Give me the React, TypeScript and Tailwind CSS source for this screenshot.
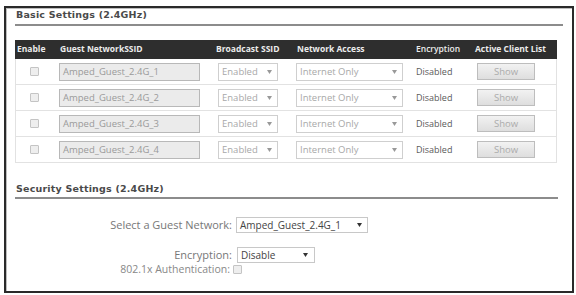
import React from "react";

const ssids = ["Amped_Guest_2.4G_1", "Amped_Guest_2.4G_2", "Amped_Guest_2.4G_3", "Amped_Guest_2.4G_4"];

function Caret({ color = "#777" }: { color?: string }) {
  return (
    <svg width="5" height="4" viewBox="0 0 5 4" className="shrink-0">
      <path d="M0 0h5L2.5 4z" fill={color} />
    </svg>
  );
}

function Box({ className = "" }: { className?: string }) {
  return <div className={"w-[9px] h-[9px] border border-[#c4c4c4] bg-[#eeeeee] rounded-[1px] " + className}></div>;
}

export default function App() {
  return (
    <div className="w-[576px] h-[295px] bg-white overflow-hidden font-['Open_Sans',sans-serif]">
      <div className="mt-[6px] ml-[4px] w-[570px] h-[287px] border-2 border-[#2a2a2a] px-[9px] shadow-[inset_1px_1px_0_#bdbdbd]">
        {/* basic settings */}
        <h2 className="pt-[1px] pl-[1px] text-[9.5px] leading-[12px] font-bold tracking-[0.2px] text-[#4a4a4a] font-['DejaVu_Sans',sans-serif]">
          Basic Settings (2.4GHz)
        </h2>
        <div className="mt-[3px] h-[2px] bg-[#8c8c8c]"></div>

        <div className="mt-[14px] w-[542px]">
          <div className="grid grid-cols-[42px_157px_80px_118px_58px_87px] h-[19px] items-center bg-[#2e2e2e] text-[8.5px] font-bold text-[#ececec] whitespace-nowrap">
            <div className="pl-[2px]">Enable</div>
            <div className="pl-[3px]">Guest NetworkSSID</div>
            <div className="pl-[2px]">Broadcast SSID</div>
            <div className="pl-[3px]">Network Access</div>
            <div className="pl-[4px] font-semibold">Encryption</div>
            <div className="pl-[5px]">Active Client List</div>
          </div>
          <div className="border-x border-[#e2e2e2]">
            {ssids.map((s) => (
              <div
                key={s}
                className="grid grid-cols-[41px_157px_80px_118px_58px_86px] h-[26px] items-center border-b border-[#e2e2e2] text-[9.5px]"
              >
                <div className="pl-[14px]">
                  <Box />
                </div>
                <div className="pl-[2px]">
                  <div className="w-[141px] h-[18px] bg-[#ebebeb] border border-[#b8b8b8] pl-[3px] flex items-center text-[#9a9a9a] leading-none">
                    {s}
                  </div>
                </div>
                <div className="pl-[4px]">
                  <div className="w-[60px] h-[18px] border border-[#cfcfcf] bg-white pl-[3px] pr-[5px] flex items-center justify-between text-[#a8a8a8] leading-none">
                    <span>Enabled</span>
                    <Caret color="#999" />
                  </div>
                </div>
                <div className="pl-[2px]">
                  <div className="w-[107px] h-[18px] border border-[#cfcfcf] bg-white pl-[3px] pr-[5px] flex items-center justify-between text-[#a8a8a8] leading-none">
                    <span>Internet Only</span>
                    <Caret color="#999" />
                  </div>
                </div>
                <div className="pl-[4px] text-[9px] text-[#5a5a5a]">Disabled</div>
                <div className="pl-[7px]">
                  <div className="w-[58px] h-[17px] border border-[#bdbdbd] bg-gradient-to-b from-[#f2f2f2] to-[#dedede] flex items-center justify-center text-[#ababab] leading-none">
                    Show
                  </div>
                </div>
              </div>
            ))}
          </div>
        </div>

        {/* security settings */}
        <h2 className="mt-[20px] pl-[1px] text-[9.5px] leading-[12px] font-bold tracking-[0.2px] text-[#4a4a4a] font-['DejaVu_Sans',sans-serif]">
          Security Settings (2.4GHz)
        </h2>
        <div className="mt-[2px] w-[543px] h-[2px] bg-[#8c8c8c]"></div>

        <div className="mt-[18px] flex items-center h-[16px] text-[11px] text-[#777]">
          <div className="w-[217px] text-right">Select a Guest Network:</div>
          <div className="ml-[4px] w-[132px] h-[16px] border border-[#c8c8c8] bg-white pl-[3px] pr-[5px] flex items-center justify-between text-[10px] text-[#444] leading-none">
            <span>Amped_Guest_2.4G_1</span>
            <Caret color="#333" />
          </div>
        </div>

        <div className="mt-[14px] flex items-center h-[16px] text-[11px] text-[#777]">
          <div className="w-[217px] text-right">Encryption:</div>
          <div className="ml-[5px] w-[78px] h-[16px] border border-[#c8c8c8] bg-white pl-[3px] pr-[6px] flex items-center justify-between text-[10px] text-[#444] leading-none">
            <span>Disable</span>
            <Caret color="#333" />
          </div>
        </div>

        <div className="mt-[1px] flex items-center h-[11px] text-[10.5px] text-[#888]">
          <div className="w-[215px] text-right">802.1x Authentication:</div>
          <Box className="ml-[3px]" />
        </div>
      </div>
    </div>
  );
}
